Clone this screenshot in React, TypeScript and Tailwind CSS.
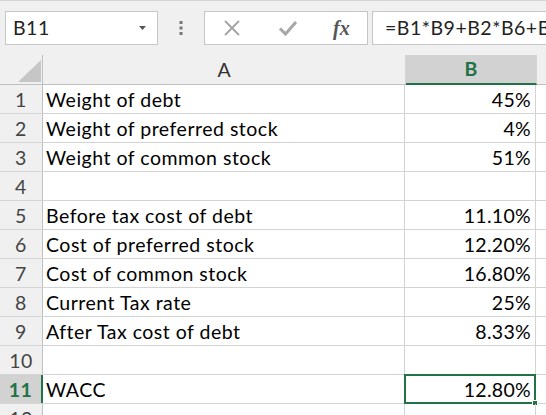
import React from "react";

const rows: { a: string; b: string }[] = [
  { a: "Weight of debt", b: "45%" },
  { a: "Weight of preferred stock", b: "4%" },
  { a: "Weight of common stock", b: "51%" },
  { a: "", b: "" },
  { a: "Before tax cost of debt", b: "11.10%" },
  { a: "Cost of preferred stock", b: "12.20%" },
  { a: "Cost of common stock", b: "16.80%" },
  { a: "Current Tax rate", b: "25%" },
  { a: "After Tax cost of debt", b: "8.33%" },
  { a: "", b: "" },
  { a: "WACC", b: "12.80%" },
  { a: "", b: "" },
];

const font = { fontFamily: "Lato, 'Open Sans', sans-serif" };

export default function App() {
  return (
    <div className="w-[546px] h-[415px] overflow-hidden bg-white relative" style={font}>
      {/* toolbar */}
      <div className="h-[55px] bg-[#f0f0f0] border-t border-[#d4d4d4] flex items-start pt-[10px] text-[#222]">
        <div className="ml-[5px] w-[153px] h-[34px] bg-white border border-[#c6c6c6] flex items-center justify-between pl-[7px] pr-[10px]">
          <span className="text-[19.5px] tracking-[0.5px] leading-none">B11</span>
          <svg width="8" height="5" viewBox="0 0 8 5"><path d="M0 0H7L3.5 4Z" fill="#555" /></svg>
        </div>
        <div className="w-[46px] h-[34px] flex items-center justify-center">
          <svg width="4" height="14" viewBox="0 0 4 14">
            <rect x="0.5" y="0" width="3" height="3" fill="#777" />
            <rect x="0.5" y="5.5" width="3" height="3" fill="#777" />
            <rect x="0.5" y="11" width="3" height="3" fill="#777" />
          </svg>
        </div>
        <div className="w-[164px] h-[34px] bg-white border border-[#c6c6c6] flex items-center">
          <svg className="ml-[18px]" width="18" height="16" viewBox="0 0 18 16">
            <path d="M2 1L16 15M16 1L2 15" stroke="#a6a6a6" strokeWidth="2" fill="none" />
          </svg>
          <svg className="ml-[37px]" width="20" height="16" viewBox="0 0 20 16">
            <path d="M2 8.5L7.5 14L18 2" stroke="#a6a6a6" strokeWidth="3" fill="none" />
          </svg>
          <span
            className="ml-[35px] text-[20px] italic font-bold text-[#555] leading-none"
            style={{ fontFamily: "'Liberation Serif', 'DejaVu Serif', serif" }}
          >
            fx
          </span>
        </div>
        <div className="ml-[4px] flex-1 h-[34px] bg-white border-y border-l border-[#c6c6c6] flex items-center pl-[12px] overflow-hidden whitespace-nowrap">
          <span className="text-[19.5px] tracking-[0.5px] leading-none">=B1*B9+B2*B6+B3*B7</span>
        </div>
      </div>

      {/* column headers */}
      <div className="h-[30px] flex bg-[#f0f0f0] border-b border-[#c0c0c0]">
        <div className="w-[43px] border-r border-[#c0c0c0] relative flex items-end justify-end pr-[1px] pb-[2px]">
          <svg width="23" height="22" viewBox="0 0 23 22"><path d="M23 0V22H0Z" fill="#c6c6c6" /></svg>
        </div>
        <div className="w-[363px] border-r border-[#d4d4d4] flex items-center justify-center text-[19.5px] text-[#333]">
          A
        </div>
        <div className="w-[131px] border-r border-[#d4d4d4] bg-[#d2d2d2] border-b-2 border-b-[#217346] mb-[-1px] flex items-center justify-center text-[19.5px] font-bold text-[#217346]">
          B
        </div>
        <div className="flex-1" />
      </div>

      {/* rows */}
      {rows.map((r, i) => {
        const sel = i === 10;
        return (
          <div key={i} className="h-[29px] flex border-b border-[#d4d4d4]">
            <div
              className={
                sel
                  ? "w-[43px] bg-[#d2d2d2] border-r-2 border-r-[#217346] flex items-end justify-center pb-[2px] text-[19.5px] tracking-[0.5px] font-bold text-[#217346] leading-[22px]"
                  : "w-[43px] bg-[#f0f0f0] border-r border-[#c0c0c0] flex items-end justify-center pb-[2px] text-[19.5px] tracking-[0.5px] text-[#444] leading-[22px]"
              }
            >
              {i + 1}
            </div>
            <div className="w-[362px] border-r border-[#d4d4d4] flex items-end pl-[3px] pb-[2px] text-[19.5px] tracking-[0.5px] text-black leading-[22px] whitespace-nowrap">
              {r.a}
            </div>
            <div className="w-[131px] border-r border-[#d4d4d4] relative flex items-end justify-end pr-[4px] pb-[2px] text-[19.5px] tracking-[0.3px] text-black leading-[22px]">
              {r.b}
              {sel && (
                <>
                  <div className="absolute left-[-1px] top-[-1px] right-[-1px] bottom-[-1px] border-2 border-[#217346]" />
                  <div className="absolute right-[-3px] bottom-[-3px] w-[6px] h-[6px] bg-[#217346] border border-white" />
                </>
              )}
            </div>
            <div className="flex-1" />
          </div>
        );
      })}
    </div>
  );
}
